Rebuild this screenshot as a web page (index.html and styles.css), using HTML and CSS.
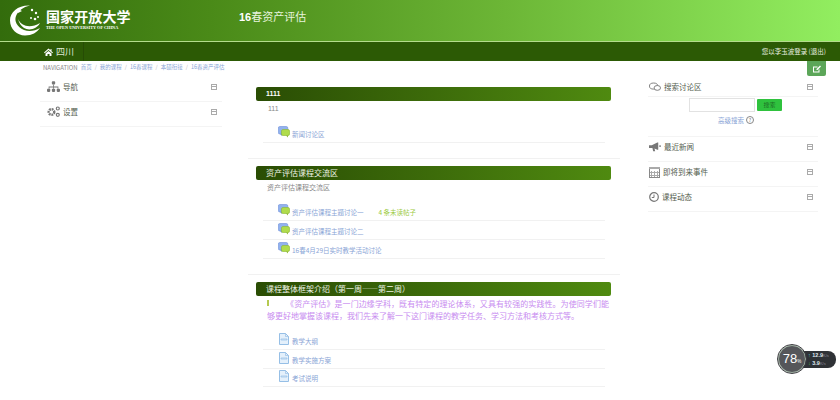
FILE: index.html
```html
<!DOCTYPE html>
<html lang="zh">
<head>
<meta charset="utf-8">
<title>16春资产评估</title>
<link rel="stylesheet" href="styles.css">
</head>
<body>
<header class="top">
  <div class="logo">
    <svg class="logo-mark" width="31" height="31" viewBox="0 0 31 31">
      <path d="M20 .5C8 0 0 7 0 15.500 0 24 7 30.500 15 30.500c7 0 12-3 15-7.500-5 3-11 4-16 2C7 22 4 16 6 11 8 6 13 2 20 .5z" fill="#fff"/>
      <path d="M8 14c3 7 12 10 22 4-3 6-11 8-16 5-3-2-5-5-6-9z" fill="#fff"/>
      <g fill="#fff"><circle cx="22" cy="5" r="1.200"/><circle cx="26" cy="8" r="1.200"/><circle cx="28" cy="12" r="1"/><circle cx="25" cy="14" r="1.300"/><circle cx="21" cy="13" r="1"/><path d="M8 4l4 2-4 2-1-2z"/></g>
    </svg>
    <div class="logo-text">
      <div class="logo-cn">国家开放大学</div>
      <div class="logo-en">THE OPEN UNIVERSITY OF CHINA</div>
    </div>
  </div>
  <div class="course-name"><b>16</b>春资产评估</div>
</header>
<nav class="bar">
  <div class="bar-home">
    <svg width="9" height="8" viewBox="0 0 18 16"><path d="M9 1 0 9l1.500 1.300L9 4l7.500 6.300L18 9l-3-2.600V2h-2v2.700zM3 11v5h4v-4h4v4h4v-5L9 6z" fill="#fff"/></svg>
    <span>四川</span>
  </div>
  <div class="bar-user">您以李玉波登录 (退出)</div>
</nav>
<div class="crumbs">
  <div class="crumb-text"><span class="crumb-nav">NAVIGATION</span><a>首页</a><i>/</i><a>我的课程</a><i>/</i><a>16春课程</a><i>/</i><a>本硕衔接</a><i>/</i><a>16春资产评估</a></div>
  <div class="edit-btn">
    <svg width="9" height="8" viewBox="0 0 18 16"><path d="M2 3h9v2H4v8h9V9h2v6H2zM9 8l7-7 2 2-7 7H9z" fill="#fff"/></svg>
  </div>
</div>
<main class="page">
  <aside class="side-left">
    <div class="block">
      <svg class="bi" width="13" height="12" viewBox="0 0 16 14"><g fill="#777"><rect x="6" y="0" width="4" height="4" rx="1"/><rect x="0" y="9" width="4" height="4" rx="1"/><rect x="6" y="9" width="4" height="4" rx="1"/><rect x="12" y="9" width="4" height="4" rx="1"/><path d="M7.500 4h1v2.500H14V9h-1V7.500H8.500V9h-1V7.500H3V9H2V6.500h5.500z"/></g></svg>
      <span class="bt">导航</span><i class="tog"></i>
    </div>
    <div class="block">
      <svg class="bi" width="13" height="11" viewBox="0 0 13 11"><g fill="none" stroke="#777"><circle cx="4.500" cy="6" r="2.800" stroke-width="2.400" stroke-dasharray="1.800 .8"/><circle cx="10.800" cy="2.500" r="1.500" stroke-width="1.200"/><circle cx="10.800" cy="8.800" r="1.500" stroke-width="1.200"/></g></svg>
      <span class="bt">设置</span><i class="tog"></i>
    </div>
  </aside>
  <section class="center">
    <div class="sec">
      <h3 class="sec-title num">1111</h3>
      <p class="sec-sum one">111</p>
      <ul class="acts">
        <li class="act"><svg class="forum" width="12" height="12" viewBox="0 0 12 12"><use href="#f"/></svg><a>新闻讨论区</a></li>
      </ul>
    </div>
    <div class="sec">
      <h3 class="sec-title">资产评估课程交流区</h3>
      <p class="sec-sum">资产评估课程交流区</p>
      <ul class="acts">
        <li class="act"><svg class="forum" width="12" height="12" viewBox="0 0 12 12"><use href="#f"/></svg><a>资产评估课程主题讨论一</a><span class="unread">4 条未读帖子</span></li>
        <li class="act"><svg class="forum" width="12" height="12" viewBox="0 0 12 12"><use href="#f"/></svg><a>资产评估课程主题讨论二</a></li>
        <li class="act"><svg class="forum" width="12" height="12" viewBox="0 0 12 12"><use href="#f"/></svg><a>16春4月29日实时教学活动讨论</a></li>
      </ul>
    </div>
    <div class="sec last">
      <h3 class="sec-title">课程整体框架介绍（第一周——第二周）</h3>
      <p class="intro"><span class="mark"></span>《资产评估》是一门边缘学科，既有特定的理论体系，又具有较强的实践性。为使同学们能够更好地掌握该课程，我们先来了解一下这门课程的教学任务、学习方法和考核方式等。</p>
      <ul class="acts">
        <li class="act"><svg class="forum" width="12" height="12" viewBox="0 0 12 12"><use href="#d"/></svg><a>教学大纲</a></li>
        <li class="act"><svg class="forum" width="12" height="12" viewBox="0 0 12 12"><use href="#d"/></svg><a>教学实施方案</a></li>
        <li class="act"><svg class="forum" width="12" height="12" viewBox="0 0 12 12"><use href="#d"/></svg><a>考试说明</a></li>
      </ul>
    </div>
  </section>
  <aside class="side-right">
    <div class="search">
      <div class="block-head">
        <svg class="bi" width="12" height="10" viewBox="0 0 13 10"><g fill="#fff" stroke="#777"><ellipse cx="5" cy="4" rx="4.500" ry="3.300"/><ellipse cx="9" cy="6" rx="3.500" ry="2.600"/></g></svg>
        <span class="bt">搜索讨论区</span><i class="tog"></i>
      </div>
      <div class="search-row"><span class="fake-input"></span><span class="go">搜索</span></div>
      <div class="adv"><a>高级搜索</a><i class="help">?</i></div>
    </div>
    <div class="block news">
      <svg class="bi" width="12" height="10" viewBox="0 0 13 10"><path d="M0 3h3l6-3h1v8H9L6 6.500l.7 3H4.500L3.700 6H0z" fill="#777"/><path d="M11 3h2v2h-2z" fill="#999"/></svg>
      <span class="bt">最近新闻</span><i class="tog"></i>
    </div>
    <div class="block news">
      <svg class="bi" width="11" height="12" viewBox="0 0 11 12"><rect x=".5" y="1.500" width="10" height="10" fill="#fff" stroke="#888"/><path d="M0 1h11v2H0zM2 5h1v6H2zm3 0h1v6H5zm3 0h1v6H8zM1 6h9v1H1zm0 3h9v1H1z" fill="#aaa"/></svg>
      <span class="bt">即将到来事件</span><i class="tog"></i>
    </div>
    <div class="block news">
      <svg class="bi" width="10" height="10" viewBox="0 0 10 10"><circle cx="5" cy="5" r="4.300" fill="none" stroke="#777" stroke-width="1.200"/><path d="M5 2.500V5.500H2.800" fill="none" stroke="#777"/></svg>
      <span class="bt">课程动态</span><i class="tog"></i>
    </div>
  </aside>
</main>
<div class="meter">
  <div class="meter-dial"><b>78</b><small>%</small></div>
  <div class="meter-rates"><div><i class="up">↑</i> 12.9<small>K/s</small></div><div><i class="down">↓</i> 3.9<small>K/s</small></div></div>
</div>
<svg class="defs" width="0" height="0" aria-hidden="true">
  <symbol id="f" viewBox="0 0 12 12">
    <rect x="0.300" y="0.500" width="9.500" height="7.500" rx="1.500" fill="#92b2ee" stroke="#6e8ed8" stroke-width=".6"/>
    <path d="M2 8h2v2z" fill="#6e8ed8"/>
    <rect x="3.500" y="3.500" width="8" height="6" rx="1.500" fill="#b0dc4c" stroke="#8cb82e" stroke-width=".6"/>
    <path d="M8 9.500h2v2z" fill="#8cb82e"/>
  </symbol>
  <symbol id="d" viewBox="0 0 12 12">
    <path d="M1.500.500h6l3 3v8h-9z" fill="#e4f0fb" stroke="#96bfe6"/>
    <path d="M7.500.500v3h3M3 6h6v1H3z" fill="none" stroke="#96bfe6" stroke-width=".7"/>
  </symbol>
</svg>
</body>
</html>
```
FILE: styles.css
```css
* { box-sizing: border-box; }
html, body { margin: 0; padding: 0; }
body {
  width: 840px;
  height: 400px;
  overflow: hidden;
  background: #fff;
  font-family: "Noto Sans CJK SC", "Liberation Sans", sans-serif;
  font-size: 7px;
  color: #666;
  position: relative;
}
a { color: #8aa5d6; text-decoration: none; }
ul { list-style: none; margin: 0; padding: 0; }
p, h3 { margin: 0; }

.top {
  height: 42px;
  display: flex;
  align-items: center;
  background: linear-gradient(90deg, #336c0c 0%, #4a8a18 25%, #6cb636 60%, #92ee60 100%);
  border-bottom: 1px solid #b4dc8c;
}
.logo { display: flex; align-items: center; margin-left: 10px; width: 229px; }
.logo-mark { flex: none; }
.logo-text { margin-left: 5px; padding-bottom: 2px; color: #fff; }
.logo-cn { font-size: 14px; font-weight: 700; line-height: 14px; letter-spacing: .1px; }
.logo-en { font-family: "Liberation Serif", serif; font-size: 4.300px; font-weight: 700; line-height: 6px; margin-top: 2px; white-space: nowrap; }
.course-name { font-size: 11px; color: #e6f3dc; line-height: 14px; margin-top: -9px; }
.course-name b { font-family: "Liberation Sans", sans-serif; color: #fff; }

.bar {
  height: 19px;
  display: flex;
  align-items: center;
  justify-content: space-between;
  background: #2c5a05;
  color: #fff;
}
.bar-home {
  height: 19px;
  margin-left: 34px;
  padding-left: 10px;
  width: 50px;
  display: flex;
  align-items: center;
  gap: 3px;
  font-size: 9px;
  white-space: nowrap;
  color: #dfe9d6;
  border-right: 1px solid #264c05;
}
.bar-user { font-size: 6.500px; margin: -2px 14px 0 0; color: #e8f0e0; }

.crumbs {
  height: 16px;
  padding: 0 14px 0 43px;
  display: flex;
  justify-content: space-between;
  align-items: flex-start;
}
.crumb-text { font-size: 5.500px; line-height: 13px; color: #888; display: flex; white-space: nowrap; }
.crumb-nav { margin-right: 3px; font-size: 6px; }
.crumb-text i { font-style: normal; margin: 0 3px; color: #bbb; }
.edit-btn {
  width: 19px;
  height: 15px;
  background: #5ca659;
  border-radius: 0 0 2px 2px;
  display: flex;
  align-items: center;
  justify-content: center;
}

.page { display: grid; grid-template-columns: 182px 372px 172px; column-gap: 26px; margin: 0 0 0 40px; }

.block {
  display: flex;
  align-items: center;
  height: 25px;
  padding: 0 5px 5px 7px;
  border-bottom: 1px solid #f4f4f4;
}
.bt { font-size: 7.500px; color: #55604f; margin-left: 3px; flex: 1; white-space: nowrap; }
.tog { width: 6px; height: 6px; border: 1px solid #aaa; position: relative; flex: none; }
.tog::after { content: ""; position: absolute; left: 0; right: 0; top: 1.500px; height: 1px; background: #aaa; }
.bi { flex: none; }

.center { padding: 10px 9px 0 8px; }
.sec { border-bottom: 1px solid #f1f1f1; padding: 0 9px 15px 8px; margin: 0 -9px 7px -8px; }
.sec.last { border: 0; margin: 0 -9px 0 -8px; }
.sec-title {
  height: 14px;
  line-height: 13px;
  padding-left: 10px;
  font-size: 8px;
  font-weight: 400;
  color: #eef4e6;
  background: linear-gradient(90deg, #2a4d04, #4f8a10);
  border-radius: 2px;
}
.sec-title.num { font-family: "Liberation Sans", sans-serif; font-weight: 700; color: #fff; font-size: 7px; }
.sec-sum { font-size: 7px; line-height: 9px; margin: 3px 0 0 11px; color: #888; }
.sec-sum.one { font-family: "Liberation Sans", sans-serif; margin-left: 12px; }
.acts { margin: 11px 6px 0 7px; }
.act {
  display: flex;
  align-items: flex-end;
  height: 18.700px;
  padding: 0 0 3px 15px;
  border-bottom: 1px solid #f1f1f1;
  font-size: 6.500px;
  line-height: 9px;
  white-space: nowrap;
}
.forum { margin-right: 2px; flex: none; position: relative; top: -1px; }
.unread { margin-left: 15px; color: #9ccb3f; }
.intro { font-size: 8px; line-height: 12px; color: #c88cf0; margin: 2px 2px -1.500px 11px; text-align: justify; }
.mark { display: inline-block; width: 19px; height: 6px; vertical-align: 1px; border-left: 2px solid #b5c950; }

.search { height: 60px; border-bottom: 1px solid #f4f4f4; }
.block-head { display: flex; align-items: center; height: 20px; padding: 0 5px 0 1px; border-bottom: 1px solid #f4f4f4; }
.news { padding-left: 1px; }
.search-row { display: flex; gap: 2px; margin: 1px 0 0 41px; }
.fake-input { width: 66px; height: 14px; border: 1px solid #e2e2e2; background: #fff; }
.go { width: 25px; height: 12px; border-radius: 1px; background: #2fc23e; color: #1d6e25; font-size: 6px; line-height: 12px; text-align: center; margin-top: 1px; }
.adv { display: flex; align-items: center; gap: 2px; font-size: 6.500px; margin: 3px 0 0 70px; }
.help { width: 8px; height: 8px; border: 1px solid #888; border-radius: 50%; font-style: normal; font-size: 5px; line-height: 6px; text-align: center; color: #777; }
.side-right { margin-left: 2px; }

.meter { position: absolute; left: 778px; top: 345px; width: 58px; height: 28px; }
.meter-dial {
  position: absolute; left: 0; top: 0; width: 28px; height: 28px; z-index: 1;
  border-radius: 50%;
  background: #55565a;
  border: 1px solid #9db0a0;
  outline: 1px solid #3c3c40;
  color: #fff;
  font-family: "Liberation Sans", sans-serif;
  text-align: center;
  line-height: 26px;
}
.meter-dial b { font-weight: 400; font-size: 13px; }
.meter-dial small { font-size: 4.500px; }
.meter-rates {
  position: absolute; left: 22px; top: 6px; width: 36px; height: 17px;
  background: #2f3236;
  border-radius: 0 8px 8px 0;
  padding: 1px 0 0 8px;
  color: #dfe6ee;
  font-family: "Liberation Sans", sans-serif;
  font-size: 5.500px;
  font-weight: 700;
  line-height: 7.500px;
  white-space: nowrap;
}
.meter-rates small { font-size: 4px; font-weight: 400; color: #889; }
.meter-rates i { font-style: normal; }
.up { color: #5cc8d8; }
.down { color: #52b85c; }
.defs { position: absolute; }
```
